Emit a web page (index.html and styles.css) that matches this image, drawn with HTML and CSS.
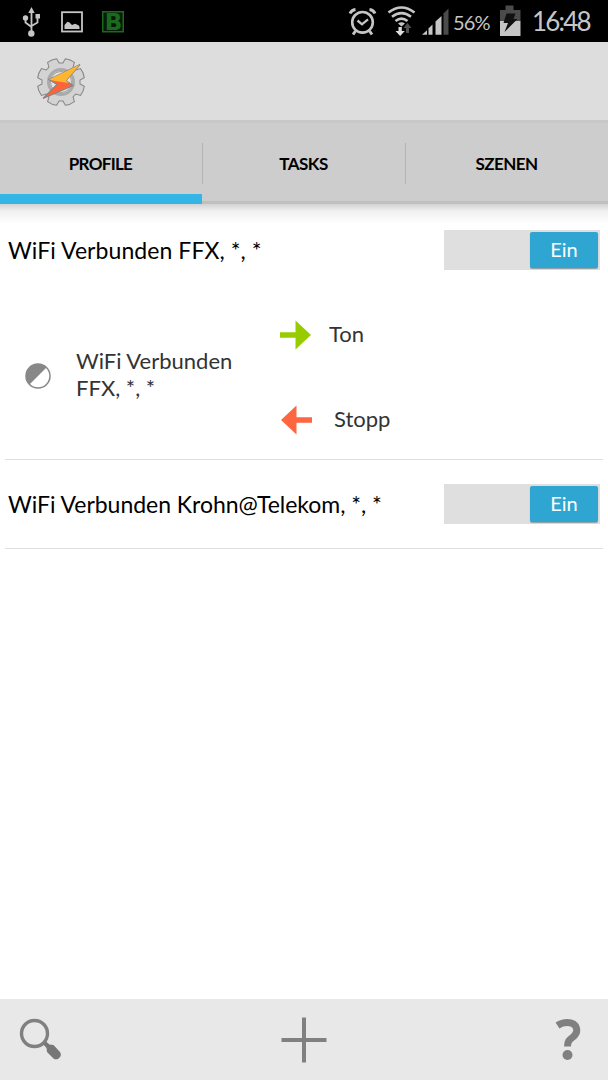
FILE: index.html
```
<!DOCTYPE html>
<html lang="de">
<head>
    <meta charset="utf-8">
    <title>Tasker</title>
    <link rel="stylesheet" href="styles.css">
</head>
<body>
    <div class="statusbar">
        <svg class="status-left" width="130" height="42" viewBox="0 0 130 42">
            <!-- USB -->
            <g stroke="#c6c6c6" stroke-width="1.8" fill="none">
                <path d="M31.500 11v22M25.500 18v4.500l6 4.500M37.500 17v5.500l-6 3.500"/>
            </g>
            <path d="M31.500 7l3.200 6h-6.400z" fill="#c6c6c6"/>
            <circle cx="25.500" cy="18" r="2.700" fill="#c6c6c6"/>
            <rect x="35.500" y="14" width="4.500" height="4.500" fill="#c6c6c6"/>
            <circle cx="31.300" cy="33.500" r="3.200" fill="#c6c6c6"/>
            <!-- Bild -->
            <rect x="62" y="12.200" width="20" height="19.300" fill="none" stroke="#c6c6c6" stroke-width="1.800"/>
            <path d="M64.500 29v-4l3-3.200 2 .8 2.500 2.500 3-1.300 3.500 1.500 1 1.500v2.200z" fill="#c6c6c6"/>
            <rect x="102" y="11" width="22" height="21.500" fill="#1b691f"/>
            <rect x="103.500" y="12.500" width="19" height="18.500" fill="#071a08"/>
            <text class="b-icon" x="113.500" y="30" text-anchor="middle">B</text>
        </svg>
        <div class="status-right">
            <svg width="108" height="42" viewBox="344 0 108 42">
                <!-- Wecker -->
                <g fill="none" stroke="#c6c6c6">
                    <circle cx="362.500" cy="22.300" r="10.300" stroke-width="2.600"/>
                    <path d="M357.500 20.500l4.500 3.800 6-5" stroke-width="2.300"/>
                    <path d="M350 13.500q1.500-3.500 5.500-4M375 13.500q-1.500-3.500-5.500-4" stroke-width="3"/>
                    <path d="M355.500 31l-2.500 3.500M369.500 31l2.500 3.500" stroke-width="3"/>
                </g>
                <!-- WLAN -->
                <g fill="none" stroke="#c6c6c6" stroke-width="2.600">
                    <path d="M388.500 12.500q13-10 26 0"/>
                    <path d="M392 16.800q9.500-7.300 19 0"/>
                    <path d="M395.500 21q6-4.700 12 0"/>
                </g>
                <path d="M398 23.500q3.500-2.500 7 0l-3.500 3z" fill="#c6c6c6"/>
                <path d="M398.500 27v4h-3l4.700 5 4.600-5h-3v-4z" fill="#dedede"/>
                <path d="M406 33v-5h-2.500l4-5 4 5h-2.500v5z" fill="#505050"/>
                <!-- Empfang -->
                <path d="M422 34.800l5-4.500v4.500z" fill="#c6c6c6"/>
                <path d="M428.500 28.500l4-4v10.300h-4z" fill="#c6c6c6"/>
                <path d="M435.500 21.500l6-5.500v18.800h-6z" fill="#c6c6c6"/>
                <path d="M443.500 13.500l5-5v26.300h-5z" fill="#4b4b4b"/>
            </svg>
            <span class="percent">56%</span>
            <svg class="battery" width="22" height="42" viewBox="499 0 22 42">
                <path d="M500 10h5.500v-4.500h8v4.500h7v11h-20.500z" fill="#4b4b4b"/>
                <path d="M500 21h20.500v15h-20.500z" fill="#c6c6c6"/>
                <path d="M506.500 13.500h9l-2 5.500h4l-13 13 3.500-9h-4.500z" fill="#111"/>
            </svg>
            <span class="clock">16:48</span>
        </div>
    </div>

    <div class="actionbar">
        <svg width="50" height="50" viewBox="-25 -25 50 50">
            <defs>
                <path id="tooth" d="M-7.270-17.550A19 19 0 0 1-5.500-18.300L-4.900-23.200Q0-24.500 4.900-23.200L5.500-18.300A19 19 0 0 1 7.270-17.550"/>
            </defs>
            <circle r="19" fill="#d3d3d3"/>
            <g fill="#d3d3d3" stroke="#858585" stroke-width="1">
                <use href="#tooth" transform="rotate(22.500)"/>
                <use href="#tooth" transform="rotate(67.500)"/>
                <use href="#tooth" transform="rotate(112.500)"/>
                <use href="#tooth" transform="rotate(157.500)"/>
                <use href="#tooth" transform="rotate(202.500)"/>
                <use href="#tooth" transform="rotate(247.500)"/>
                <use href="#tooth" transform="rotate(292.500)"/>
                <use href="#tooth" transform="rotate(337.500)"/>
            </g>
            <circle r="12.500" fill="#e4e4e4" stroke="#aaa" stroke-width="3"/>
            <circle r="10.500" fill="none" stroke="#8f8f8f" stroke-width=".8"/>
            <path d="M19-17.500L-12-2.500-4 2.500-18 16.500 12 3.500 5-1.500z" fill="#ff6439" stroke="#858585" stroke-width="1.200"/>
            <path d="M19-17.500L-12-2.500-6-1 8 1 5-1.500z" fill="#ffb62f"/>
        </svg>
    </div>

    <div class="tabs">
        <div class="tab active"><span class="t-profile">PROFILE</span></div>
        <div class="tab"><span class="t-tasks">TASKS</span></div>
        <div class="tab"><span class="t-szenen">SZENEN</span></div>
    </div>

    <div class="content">
        <div class="profile open">
            <div class="profile-head">
                <span class="title">WiFi Verbunden FFX, *, *</span>
                <div class="switch"><span class="knob">Ein</span></div>
            </div>
            <div class="details">
                <div class="context">
                    <svg width="26" height="26" viewBox="0 0 26 26">
                        <circle cx="13" cy="13" r="12" fill="#fff" stroke="#888" stroke-width="1.500"/>
                        <path d="M4.500 21.500A12 12 0 0 1 21.500 4.500z" fill="#888"/>
                    </svg>
                    <span class="context-name">WiFi Verbunden<br>FFX, *, *</span>
                </div>
                <div class="links">
                    <div class="link">
                        <svg width="32" height="30" viewBox="0 0 32 30">
                            <path d="M0 12.300h15.500V.5L31 15 15.500 29.500V17.700H0z" fill="#9c0"/>
                        </svg>
                        <span class="ton">Ton</span>
                    </div>
                    <div class="link">
                        <svg width="32" height="30" viewBox="0 0 32 30">
                            <path d="M32 12.300H16.500V.5L1 15l15.500 14.500V17.700H32z" fill="#ff6640"/>
                        </svg>
                        <span class="stopp">Stopp</span>
                    </div>
                </div>
            </div>
        </div>
        <div class="profile">
            <div class="profile-head">
                <span class="title long">WiFi Verbunden Krohn@Telekom, *, *</span>
                <div class="switch"><span class="knob">Ein</span></div>
            </div>
        </div>
    </div>

    <div class="bottombar">
        <svg width="44" height="44" viewBox="0 0 44 44">
            <circle cx="15.500" cy="15.500" r="13" fill="none" stroke="#808080" stroke-width="3.400"/>
            <path d="M24 26l3-2.500 3.500 3 4 .5 6.500 7c3 4-2.500 9.500-6.500 6.500l-6.500-6.500-.5-4z" fill="#777"/>
        </svg>
        <svg class="add" width="46" height="46" viewBox="0 0 46 46">
            <path d="M.5 23h45M23 .5v45" stroke="#808080" stroke-width="4"/>
        </svg>
        <svg class="help" width="26" height="44" viewBox="0 0 26 44">
            <path d="M2.500 7.500Q7 4.500 12 4.500C23 4.500 24 14.500 18 19 14 22 12.500 23.500 12.500 28.500" fill="none" stroke="#808080" stroke-width="7"/>
            <circle cx="12.500" cy="37" r="5" fill="#808080"/>
        </svg>
    </div>
</body>
</html>
```

FILE: styles.css
```
* {
    box-sizing: border-box;
}
body {
    margin: 0;
    height: 1080px;
    display: flex;
    flex-direction: column;
    font-family: Lato, "Open Sans", sans-serif;
    background: #fff;
    color: #000;
    overflow: hidden;
}
svg {
    display: block;
    flex: none;
}
span {
    white-space: nowrap;
}

/* Statusleiste */
.statusbar {
    height: 42px;
    display: flex;
    justify-content: space-between;
    background: #000;
    color: #c6c6c6;
}
.status-right {
    display: flex;
    align-items: center;
    width: 264px;
}
.b-icon {
    font-family: "DejaVu Sans", sans-serif;
    font-size: 23px;
    font-weight: bold;
    fill: #1b691f;
}
.percent {
    width: 47px;
    padding-left: 1px;
    padding-top: 1px;
    font-size: 20px;
    letter-spacing: -0.9px;
}
.clock {
    padding-left: 11px;
    font-size: 26px;
    letter-spacing: -1.8px;
}

/* Kopfbereich */
.actionbar {
    height: 78px;
    padding: 15px 36px;
    background: #ddd;
}
.tabs {
    height: 84px;
    flex: none;
    display: grid;
    grid-template-columns: 202px 203px 203px;
    background: #cdcdcd;
    border-top: 3px solid #c8c8c8;
}
.tab {
    display: flex;
    align-items: center;
    justify-content: center;
    padding-top: 2px;
    font-size: 17px;
    font-weight: bold;
    border-bottom: 3px solid #bfbfbf;
    background: linear-gradient(#b4b4b4, #b4b4b4) no-repeat left 20px / 1px 41px;
}
.tab.active {
    padding-top: 9px;
    padding-right: 1px;
    border-bottom: 10px solid #33b5e5;
    background: none;
}
.t-profile {
    letter-spacing: -0.7px;
}
.t-tasks {
    letter-spacing: -0.5px;
}
.t-szenen {
    letter-spacing: -0.6px;
}

/* Profilliste */
.content {
    flex: 1;
    padding: 0 5px;
    background: linear-gradient(#d2d2d2, #f0f0f0 7px, #fff 20px) no-repeat top / 100% 20px;
}
.profile {
    height: 89px;
    border-bottom: 1px solid #dedede;
}
.profile.open {
    height: 256px;
}
.profile-head {
    display: flex;
    align-items: center;
    justify-content: space-between;
    padding: 24px 3px 0;
}
.profile.open .profile-head {
    padding-top: 26px;
}
.title {
    font-size: 23px;
    letter-spacing: 0.07px;
}
.title.long {
    letter-spacing: -0.03px;
}
.switch {
    width: 156px;
    height: 40px;
    padding: 2px;
    display: flex;
    justify-content: flex-end;
    background: #dfdfdf;
}
.knob {
    width: 68px;
    height: 36px;
    line-height: 35px;
    text-align: center;
    font-size: 20px;
    color: #fff;
    background: #2ea6d1;
    border-radius: 2px;
    box-shadow: 0 1px 1px #8b9da4;
}
.details {
    display: flex;
    padding: 50px 0 0 20px;
    color: #333;
}
.context {
    width: 255px;
    height: 112px;
    display: flex;
    align-items: center;
}
.context-name {
    margin-left: 25px;
    padding-bottom: 4px;
    font-size: 22px;
    line-height: 27px;
}
.links {
    display: flex;
    flex-direction: column;
    gap: 55px;
}
.link {
    display: flex;
    align-items: center;
    height: 30px;
    font-size: 22px;
}
.link span {
    padding-bottom: 3px;
}
.ton {
    margin-left: 17px;
}
.stopp {
    margin-left: 22px;
}

/* Untere Leiste */
.bottombar {
    height: 81px;
    display: flex;
    align-items: center;
    justify-content: space-between;
    padding: 0 27px 0 19px;
    background: #e8e8e8;
}
.add {
    margin-right: 10px;
}
```
